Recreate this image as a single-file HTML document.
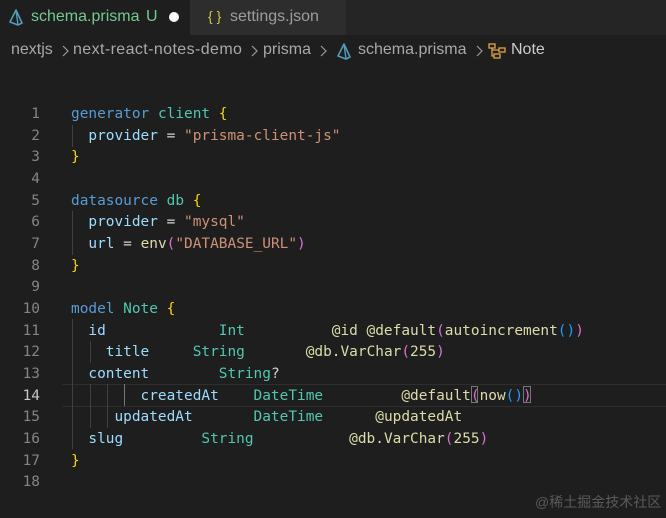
<!DOCTYPE html>
<html><head><meta charset="utf-8"><style>
body{margin:0;width:666px;height:518px;background:#1e1e1e;overflow:hidden;position:relative;font-family:"Liberation Sans",sans-serif}
.tabbar{position:absolute;left:0;top:0;width:666px;height:35px;background:#252526}
.tab1{position:absolute;left:0;top:0;width:190px;height:35px;background:#1e1e1e}
.tab2{position:absolute;left:190px;top:0;width:156px;height:35px;background:#2d2d2d}
.t{position:absolute;font-size:16px;white-space:pre}
.bc{position:absolute;font-size:16px;white-space:pre;color:#a9a9a9;top:41px}
.ch{position:absolute;top:45px}
.code{position:absolute;left:0;top:3px;font-family:"DejaVu Sans Mono","Liberation Mono",monospace;font-size:14.45px}
.ln{position:absolute;width:40px;text-align:right;color:#858585;left:0}
.l{position:absolute;left:71px;white-space:pre;color:#9cdcfe}
.k{color:#569cd6}.n{color:#4ec9b0}.s{color:#ce9178}.b{color:#ffd700}.o{color:#d4d4d4}.a{color:#dcdcaa}.p{color:#da70d6}.q{color:#179fff}
.g{position:absolute;width:1px;background:#404040}
</style></head><body>
<div class="tabbar"></div><div class="tab1"></div><div class="tab2"></div>
<svg style="position:absolute;left:9px;top:9px" width="14" height="17" viewBox="0 0 14 17"><path d="M7 1 L1 13 L9 16 L13 14 Z" fill="none" stroke="#519aba" stroke-width="1.6" stroke-linejoin="round"/><path d="M7 1 L9 16" stroke="#519aba" stroke-width="1.4"/></svg>
<div class="t" style="left:31px;top:8px;color:#73c991">schema.prisma</div>
<div class="t" style="left:146px;top:8px;color:#73c991">U</div>
<div style="position:absolute;left:169px;top:12px;width:10px;height:10px;border-radius:50%;background:#fff"></div>
<div class="t" style="left:208px;top:8px;color:#cbcb41;font-size:14px">{ }</div>
<div class="t" style="left:230px;top:8px;color:#9d9d9d">settings.json</div>
<div class="bc" style="left:11px">nextjs</div>
<svg class="ch" style="left:62px" width="7" height="12"><path d="M1 1 L6 6 L1 11" fill="none" stroke="#9a9a9a" stroke-width="1.2"/></svg>
<div class="bc" style="left:73px;letter-spacing:0.4px">next-react-notes-demo</div>
<svg class="ch" style="left:251px" width="7" height="12"><path d="M1 1 L6 6 L1 11" fill="none" stroke="#9a9a9a" stroke-width="1.2"/></svg>
<div class="bc" style="left:263px">prisma</div>
<svg class="ch" style="left:320px" width="7" height="12"><path d="M1 1 L6 6 L1 11" fill="none" stroke="#9a9a9a" stroke-width="1.2"/></svg>
<svg style="position:absolute;left:337px;top:43px" width="14" height="17" viewBox="0 0 14 17"><path d="M7 1 L1 13 L9 16 L13 14 Z" fill="none" stroke="#519aba" stroke-width="1.6" stroke-linejoin="round"/><path d="M7 1 L9 16" stroke="#519aba" stroke-width="1.4"/></svg>
<div class="bc" style="left:358px">schema.prisma</div>
<svg class="ch" style="left:476px" width="7" height="12"><path d="M1 1 L6 6 L1 11" fill="none" stroke="#9a9a9a" stroke-width="1.2"/></svg>
<svg style="position:absolute;left:488px;top:43px" width="18" height="16" viewBox="0 0 18 16"><g fill="none" stroke="#e2a53a" stroke-width="1.3"><rect x="1" y="1" width="6" height="4"/><rect x="11" y="5" width="6" height="4"/><rect x="6" y="11" width="6" height="4"/><path d="M4 5 V13 H6 M4 7 H11"/></g></svg>
<div class="bc" style="left:511px;color:#cccccc">Note</div>

<div style="position:absolute;left:62px;top:384px;width:604px;height:21px;border-top:1px solid #2e2e2e;border-bottom:1px solid #2e2e2e"></div>
<div class="g" style="left:72px;top:125px;height:22px"></div>
<div class="g" style="left:72px;top:211px;height:44px"></div>
<div class="g" style="left:72px;top:319px;height:130px"></div>
<div class="g" style="left:90px;top:341px;height:22px"></div>
<div class="g" style="left:90px;top:384px;height:44px"></div>
<div class="g" style="left:107px;top:384px;height:44px"></div>
<div class="g" style="left:124px;top:384px;height:22px;background:#777"></div>
<div style="position:absolute;left:471px;top:386px;width:7px;height:17px;border:1px solid #777;box-sizing:border-box"></div>
<div style="position:absolute;left:523px;top:386px;width:8px;height:17px;border:1px solid #777;box-sizing:border-box"></div>

<div class="code">
<div class="ln" style="top:103px">1</div><div class="l" style="top:103px"><span class="k">generator</span> <span class="n">client</span> <span class="b">{</span></div>
<div class="ln" style="top:124.6px">2</div><div class="l" style="top:124.6px">  provider <span class="o">=</span> <span class="s">"prisma-client-js"</span></div>
<div class="ln" style="top:146.3px">3</div><div class="l" style="top:146.3px"><span class="b">}</span></div>
<div class="ln" style="top:168px">4</div>
<div class="ln" style="top:189.6px">5</div><div class="l" style="top:189.6px"><span class="k">datasource</span> <span class="n">db</span> <span class="b">{</span></div>
<div class="ln" style="top:211.3px">6</div><div class="l" style="top:211.3px">  provider <span class="o">=</span> <span class="s">"mysql"</span></div>
<div class="ln" style="top:233px">7</div><div class="l" style="top:233px">  url <span class="o">=</span> <span class="a">env</span><span class="p">(</span><span class="s">"DATABASE_URL"</span><span class="p">)</span></div>
<div class="ln" style="top:254.6px">8</div><div class="l" style="top:254.6px"><span class="b">}</span></div>
<div class="ln" style="top:276.3px">9</div>
<div class="ln" style="top:298px">10</div><div class="l" style="top:298px"><span class="k">model</span> <span class="n">Note</span> <span class="b">{</span></div>
<div class="ln" style="top:319.6px">11</div><div class="l" style="top:319.6px">  id             <span class="n">Int</span>          <span class="a">@id @default</span><span class="p">(</span><span class="a">autoincrement</span><span class="q">()</span><span class="p">)</span></div>
<div class="ln" style="top:341.3px">12</div><div class="l" style="top:341.3px">    title     <span class="n">String</span>       <span class="a">@db.VarChar</span><span class="p">(</span><span class="a">255</span><span class="p">)</span></div>
<div class="ln" style="top:363px">13</div><div class="l" style="top:363px">  content        <span class="n">String</span><span class="o">?</span></div>
<div class="ln" style="top:384.6px;color:#c6c6c6">14</div><div class="l" style="top:384.6px">        createdAt    <span class="n">DateTime</span>         <span class="a">@default</span><span class="p">(</span><span class="a">now</span><span class="q">()</span><span class="p">)</span></div>
<div class="ln" style="top:406.3px">15</div><div class="l" style="top:406.3px">     updatedAt       <span class="n">DateTime</span>      <span class="a">@updatedAt</span></div>
<div class="ln" style="top:428px">16</div><div class="l" style="top:428px">  slug         <span class="n">String</span>           <span class="a">@db.VarChar</span><span class="p">(</span><span class="a">255</span><span class="p">)</span></div>
<div class="ln" style="top:449.6px">17</div><div class="l" style="top:449.6px"><span class="b">}</span></div>
<div class="ln" style="top:471.3px">18</div>
</div>
<div class="t" style="left:535px;top:492px;font-size:14px;color:#5a5a5a;font-family:'Liberation Sans','Noto Sans CJK SC',sans-serif">@稀土掘金技术社区</div>
</body></html>
